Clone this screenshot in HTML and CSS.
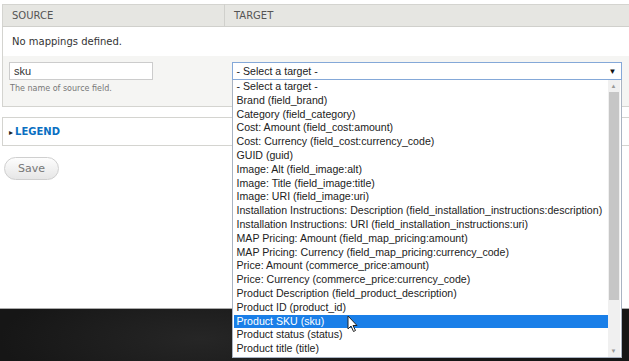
FILE: index.html
```html
<!DOCTYPE html>
<html lang="en">
<head>
    <meta charset="UTF-8">
    <meta name="viewport" content="width=device-width, initial-scale=1.0">
    <title>Mappings</title>
    <link rel="stylesheet" href="styles.css">
</head>
<body>

    <div class="pagina">
        <table class="mapeos">
            <tr>
                <th class="col-source">Source</th>
                <th>Target</th>
            </tr>
            <tr class="fila-vacia">
                <td colspan="2">No mappings defined.</td>
            </tr>
            <tr class="fila-nueva">
                <td>
                    <input type="text" class="campo" value="sku">
                    <div class="ayuda">The name of source field.</div>
                </td>
                <td>
                    <div class="selector">
                        <div class="selector-caja">
                            <span>- Select a target -</span>
                            <span class="flecha">&#9660;</span>
                        </div>
                        <div class="lista">
                            <ul class="opciones">
                                <li>- Select a target -</li>
                                <li>Brand (field_brand)</li>
                                <li>Category (field_category)</li>
                                <li>Cost: Amount (field_cost:amount)</li>
                                <li>Cost: Currency (field_cost:currency_code)</li>
                                <li>GUID (guid)</li>
                                <li>Image: Alt (field_image:alt)</li>
                                <li>Image: Title (field_image:title)</li>
                                <li>Image: URI (field_image:uri)</li>
                                <li>Installation Instructions: Description (field_installation_instructions:description)</li>
                                <li>Installation Instructions: URI (field_installation_instructions:uri)</li>
                                <li>MAP Pricing: Amount (field_map_pricing:amount)</li>
                                <li>MAP Pricing: Currency (field_map_pricing:currency_code)</li>
                                <li>Price: Amount (commerce_price:amount)</li>
                                <li>Price: Currency (commerce_price:currency_code)</li>
                                <li>Product Description (field_product_description)</li>
                                <li>Product ID (product_id)</li>
                                <li class="activa">Product SKU (sku)</li>
                                <li>Product status (status)</li>
                                <li>Product title (title)</li>
                            </ul>
                            <div class="scroll">
                                <span class="scroll-flecha">&#9650;</span>
                                <div class="scroll-pista"><div class="scroll-barra"></div></div>
                                <span class="scroll-flecha">&#9660;</span>
                            </div>
                            <svg class="cursor" width="12" height="18" viewBox="0 0 12 18">
                                <path d="M1 1 L1 14 L4 11 L6.5 16.5 L8.5 15.5 L6 10.5 L10 10.5 Z" fill="#fff" stroke="#222" stroke-width="1"/>
                            </svg>
                        </div>
                    </div>
                </td>
            </tr>
        </table>

        <fieldset class="leyenda">
            <span class="leyenda-titulo"><span class="triangulo">&#9656;</span>LEGEND</span>
        </fieldset>

        <button class="boton">Save</button>
    </div>

    <div class="foto"></div>

</body>
</html>
```

FILE: styles.css
```css
body {
    font-family: "DejaVu Sans", Verdana, sans-serif;
    background-color: #fff;
    margin: 0;
    overflow: hidden;
}

.pagina {
    height: 309px;
    padding: 4px 0 0 2px;
    box-sizing: border-box;
    border-bottom: 1px solid #aaa;
}

.mapeos {
    width: 100%;
    border-collapse: collapse;
    border: 1px solid #d4d4d0;
    border-right: none;
}

.mapeos th {
    background-color: #e6e6e2;
    color: #555;
    font-size: 10px;
    font-weight: normal;
    text-transform: uppercase;
    text-align: left;
    height: 21px;
    padding: 0 0 0 9px;
    border-bottom: 1px solid #d0d0cc;
}

.mapeos th.col-source {
    width: 212px;
    border-right: 1px solid #d0d0cc;
}

.fila-vacia td {
    font-size: 10px;
    color: #333;
    height: 29px;
    padding: 0 0 0 9px;
}

.fila-nueva td {
    background-color: #f5f5f3;
    vertical-align: top;
    height: 50px;
    padding: 6px 0 0 6px;
    box-sizing: border-box;
}

.campo {
    display: block;
    width: 144px;
    height: 18px;
    box-sizing: border-box;
    margin: 0;
    padding: 0 4px;
    border: 1px solid #ccc;
    font-family: "Liberation Sans", Arial, sans-serif;
    font-size: 11px;
    color: #333;
    background-color: #fff;
}

.ayuda {
    font-size: 8px;
    color: #777;
    margin-top: 4px;
    padding-left: 1px;
}

.fila-nueva td + td {
    padding-left: 7px;
}

.selector {
    position: relative;
    width: 390px;
    font-family: "Liberation Sans", Arial, sans-serif;
    font-size: 10.6px;
}

.selector-caja {
    display: flex;
    justify-content: space-between;
    align-items: center;
    height: 18px;
    box-sizing: border-box;
    padding: 0 4px 0 4px;
    background-color: #fff;
    border: 1px solid #84a8d8;
    color: #222;
}

.flecha {
    font-size: 8px;
    color: #111;
}

.lista {
    position: absolute;
    top: 18px;
    left: 0;
    width: 390px;
    height: 278px;
    box-sizing: border-box;
    display: flex;
    background-color: #fff;
    border: 1px solid #a9b3c2;
    border-top: none;
    z-index: 5;
}

.opciones {
    list-style: none;
    margin: 0;
    padding: 0 0 0 1px;
    flex: 1;
    min-width: 0;
    overflow: hidden;
    color: #222;
}

.opciones li {
    height: 13.8px;
    line-height: 13.8px;
    padding-left: 3px;
    white-space: nowrap;
}

.opciones li.activa {
    background-color: #1a7fe8;
    color: #fff;
}

.scroll {
    width: 12px;
    flex-shrink: 0;
    display: flex;
    flex-direction: column;
    background-color: #f0f0f0;
    margin-right: 1px;
}

.scroll-flecha {
    height: 12px;
    font-size: 6px;
    color: #999;
    text-align: center;
    line-height: 12px;
}

.scroll-pista {
    flex: 1;
    display: flex;
    flex-direction: column;
}

.scroll-barra {
    height: 208px;
    background-color: #c6c6c6;
    margin: 0 1px;
}

.cursor {
    position: absolute;
    left: 114px;
    top: 235px;
}

.leyenda {
    margin: 10px 0 0 0;
    padding: 0 0 0 6px;
    height: 29px;
    box-sizing: border-box;
    border: 1px solid #d4d4d0;
    border-right: none;
    display: flex;
    align-items: center;
}

.leyenda-titulo {
    font-size: 10px;
    font-weight: bold;
    color: #0a6fc2;
}

.triangulo {
    color: #222;
    font-size: 8px;
    margin-right: 2px;
}

.boton {
    display: block;
    margin: 11px 0 0 2px;
    width: 55px;
    height: 23px;
    border-radius: 12px;
    border: 1px solid #cfcfcf;
    background: linear-gradient(#fdfdfd, #e6e6e6);
    font-family: "DejaVu Sans", Verdana, sans-serif;
    font-size: 11px;
    color: #777;
    cursor: pointer;
}

.foto {
    height: 52px;
    background-color: #161616;
    background-image:
        radial-gradient(ellipse 60px 40px at 560px 10px, #3a3a3a, transparent),
        radial-gradient(ellipse 200px 60px at 200px 30px, #262626, transparent);
}
```
